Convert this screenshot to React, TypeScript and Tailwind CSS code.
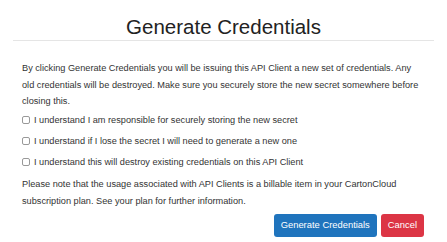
export default function App() {
  const checks = [
    "I understand I am responsible for securely storing the new secret",
    "I understand if I lose the secret I will need to generate a new one",
    "I understand this will destroy existing credentials on this API Client",
  ];

  return (
    <div className="w-[447px] h-[242px] bg-white text-[#333] font-['Liberation_Sans',Arial,sans-serif] overflow-hidden">
      {/* Header */}
      <div className="mx-[13px] pt-[15px] pb-[1px] border-b border-[#e5e5e5]">
        <h2 className="text-center text-[20.5px] leading-[24px] text-[#222]">Generate Credentials</h2>
      </div>

      {/* Body */}
      <div className="px-[22px] pt-[19px] text-[9.2px] leading-[16.5px]">
        <p>
          By clicking Generate Credentials you will be issuing this API Client a new set of credentials. Any old
          credentials will be destroyed. Make sure you securely store the new secret somewhere before closing this.
        </p>

        <div className="mt-[2px] flex flex-col gap-[4.5px]">
          {checks.map((label) => (
            <label key={label} className="flex items-center">
              <span className="w-[8px] h-[8px] border border-[#999] rounded-[2px] bg-white mr-[4px] shrink-0" />
              <span>{label}</span>
            </label>
          ))}
        </div>

        <p className="mt-[6px]">
          Please note that the usage associated with API Clients is a billable item in your CartonCloud subscription
          plan. See your plan for further information.
        </p>

        {/* Footer */}
        <div className="mt-[5px] flex justify-end gap-[4px] pr-[1px]">
          <button className="h-[23px] px-[7px] rounded-[3px] bg-[#1f74bd] text-white text-[9.4px]">
            Generate Credentials
          </button>
          <button className="h-[23px] px-[7px] rounded-[3px] bg-[#dc3545] text-white text-[9.4px]">Cancel</button>
        </div>
      </div>
    </div>
  );
}
